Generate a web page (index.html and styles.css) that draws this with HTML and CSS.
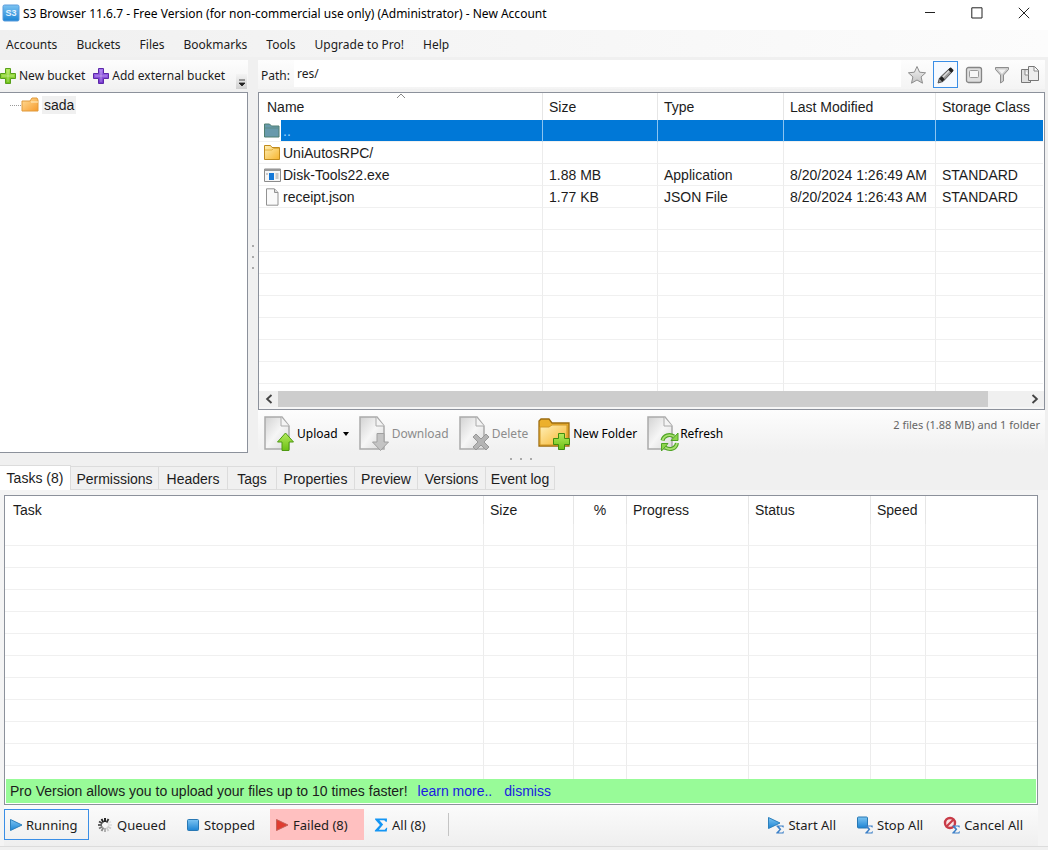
FILE: index.html
```html
<!DOCTYPE html>
<html lang="en">
<head>
<meta charset="utf-8">
<title>S3 Browser</title>
<link rel="stylesheet" href="styles.css">
</head>
<body>
<svg class="defs" aria-hidden="true">
  <defs>
    <linearGradient id="g-green" x1="0" y1="0" x2="0" y2="1"><stop offset="0" stop-color="#b4ea5c"/><stop offset="1" stop-color="#6cc014"/></linearGradient>
    <linearGradient id="g-purple" x1="0" y1="0" x2="0" y2="1"><stop offset="0" stop-color="#a678f0"/><stop offset="1" stop-color="#7434cc"/></linearGradient>
    <linearGradient id="g-folder" x1="0" y1="0" x2="1" y2="1"><stop offset="0" stop-color="#fff0b8"/><stop offset="1" stop-color="#f6b42c"/></linearGradient>
    <linearGradient id="g-orange" x1="0" y1="0" x2="1" y2="1"><stop offset="0" stop-color="#ffdf9c"/><stop offset="1" stop-color="#f79a2a"/></linearGradient>
    <linearGradient id="g-blue" x1="0" y1="0" x2="0" y2="1"><stop offset="0" stop-color="#7cc4f2"/><stop offset="1" stop-color="#1c84d4"/></linearGradient>
    <linearGradient id="g-page" x1="0" y1="0" x2="1" y2="1"><stop offset="0" stop-color="#d2d2d2"/><stop offset=".5" stop-color="#f6f6f6"/><stop offset="1" stop-color="#d8d8d8"/></linearGradient>
    <linearGradient id="g-grey" x1="0" y1="0" x2="0" y2="1"><stop offset="0" stop-color="#f2f2f2"/><stop offset="1" stop-color="#c4c4c4"/></linearGradient>
    <symbol id="plus" viewBox="0 0 16 16"><path d="M5.500 .5h5v5h5v5h-5v5h-5v-5h-5v-5h5z"/><path d="M8 2v12M2 8h12" stroke="#fff" stroke-opacity=".35" fill="none"/></symbol>
    <symbol id="page" viewBox="0 0 26 34"><path d="M1 1h17l7 9v23H1z" fill="url(#g-page)" stroke="#aaa" stroke-width="1.500"/><path d="M17 1v9h8" fill="#f4f4f4" stroke="#aaa"/></symbol>
    <symbol id="play" viewBox="0 0 14 14"><path d="M1.500 1.500 13 7 1.500 12.500z"/></symbol>
    <symbol id="sigma" viewBox="0 0 12 13"><path d="M.5.5h11v3h-1L9 2H4.500l3.500 4-4 5h5.500l1.500-2h.8l-.5 3.500H.3v-1L5 6.500.5 1.500z"/></symbol>
  </defs>
</svg>

<div class="window">
  <header class="titlebar">
    <svg class="app-icon" viewBox="0 0 18 18"><rect x="1" y="1" width="16" height="16" rx="1.500" fill="url(#g-blue)" stroke="#5a9cdc"/><text x="9" y="12" text-anchor="middle" class="app-icon-text">S3</text></svg>
    <h1 class="title">S3 Browser 11.6.7 - Free Version (for non-commercial use only) (Administrator) - New Account</h1>
    <div class="window-buttons">
      <button class="window-button" aria-label="Minimize"><svg viewBox="0 0 12 12"><path d="M1 5.500h10"/></svg></button>
      <button class="window-button" aria-label="Maximize"><svg viewBox="0 0 12 12"><path d="M.8.8h10.200v10.200H.8z"/></svg></button>
      <button class="window-button" aria-label="Close"><svg viewBox="0 0 12 12"><path d="M.8.8l10.400 10.400M11.200.8.8 11.200"/></svg></button>
    </div>
  </header>

  <nav class="menubar">
    <button>Accounts</button><button>Buckets</button><button>Files</button><button>Bookmarks</button><button>Tools</button><button>Upgrade to Pro!</button><button>Help</button>
  </nav>

  <div class="upper">
    <aside class="buckets">
      <div class="bucket-tools">
        <button><svg class="i16 green"><use href="#plus"/></svg>New bucket</button>
        <button><svg class="i16 purple"><use href="#plus"/></svg>Add external bucket</button>
        <button class="overflow" aria-label="More"><svg viewBox="0 0 8 8"><path d="M1 1h6M1 4h6L4 7z" fill="#222" stroke="#222" stroke-width=".8"/></svg></button>
      </div>
      <div class="tree">
        <div class="tree-item"><span class="tree-line"></span>
          <svg class="tree-icon" viewBox="0 0 18 16"><path d="M1 4h8l2-3h5l1 2v11H1z" fill="url(#g-orange)" stroke="#e09a3c"/><path d="M10 5h7" stroke="#fff0c8"/></svg>
          <span class="tree-label">sada</span></div>
      </div>
    </aside>

    <div class="split-v"><i></i><i></i><i></i></div>

    <section class="browser">
      <div class="path-bar">
        <label for="path">Path:</label>
        <input id="path" type="text" value="res/">
        <div class="path-tools">
          <button aria-label="Favorite"><svg viewBox="0 0 20 20"><path d="M10 1.500l2.600 5.700 6 .6-4.500 4.100 1.400 6.300L10 15l-5.500 3.200 1.400-6.300L1.400 7.800l6-.6z" fill="url(#g-grey)" stroke="#8d8d8d" stroke-linejoin="round"/></svg></button>
          <button class="pressed" aria-label="Edit"><svg viewBox="0 0 20 20"><path d="M2 18l1.500-5L14 3l3 3L7 16.500z" fill="#999" stroke="#555"/><path d="M4.500 12.500l3 3M13.500 3.500l3 3" stroke="#222" stroke-width="3.500"/><path d="M7 12l6-6" stroke="#ddd" stroke-width="1.500"/></svg></button>
          <button aria-label="Details"><svg viewBox="0 0 20 20"><rect x="2.500" y="2.500" width="15" height="15" rx="2" fill="#dedede" stroke="#858585" stroke-width="1.300"/><rect x="5.500" y="5.500" width="9" height="7" rx="1" fill="#f6f6f6" stroke="#999"/></svg></button>
          <button aria-label="Filter"><svg viewBox="0 0 20 20"><path d="M3.500 2.500h13v2L11.500 10v6l-3 2v-8L3.500 4.500z" fill="#ccc" stroke="#8d8d8d"/><path d="M6 4.500h8L10 9z" fill="#f3f3f3"/></svg></button>
          <button aria-label="Copy"><svg viewBox="0 0 20 20"><path d="M1.500 4.500h9v13h-9z" fill="#e0e0e0" stroke="#777"/><path d="M8.500 1.500h6l4 4v10h-10z" fill="#eee" stroke="#777"/><path d="M14 2v4h4M5 5v5h3.500" fill="#fff" stroke="#888"/></svg></button>
        </div>
      </div>

      <div class="files">
        <div class="grid-clip">
          <table class="grid files-grid">
            <colgroup><col><col class="w115"><col class="w126"><col class="w152"><col class="w107"></colgroup>
            <thead><tr><th class="sorted">Name<svg class="sort" viewBox="0 0 10 6"><path d="M1 5l4-4 4 4"/></svg></th><th>Size</th><th>Type</th><th>Last Modified</th><th>Storage Class</th></tr></thead>
            <tbody id="file-rows">
              <tr class="selected"><td><span class="file"><svg class="i18" viewBox="0 0 18 18"><path d="M1.500 2h5l2 2h7.500v11h-14.500z" fill="#689aac" stroke="#4e7f70"/><path d="M2 6h13.500" stroke="#5c8c86"/></svg><span class="file-name">..</span></span></td><td></td><td></td><td></td><td></td></tr>
              <tr><td><span class="file"><svg class="i18" viewBox="0 0 18 18"><path d="M1.500 1.500h6l1.500 2h7.500v12h-15z" fill="url(#g-folder)" stroke="#c08a1c"/><path d="M2 6h7l1.500-1.500H16" fill="none" stroke="#e0b040"/></svg><span class="file-name">UniAutosRPC/</span></span></td><td></td><td></td><td></td><td></td></tr>
              <tr><td><span class="file"><svg class="i18" viewBox="0 0 18 18"><path d="M1.500 3h16v12.500h-16z" fill="#f6f6f6" stroke="#8c8c8c"/><path d="M1.500 4h16" stroke="#999" stroke-width="2"/><path d="M6 7h5v7H6z" fill="#1478d8"/><path d="M12.500 8h3M12.500 10h3M12.500 12h3M3 8h2" stroke="#999"/></svg><span class="file-name">Disk-Tools22.exe</span></span></td><td>1.88 MB</td><td>Application</td><td>8/20/2024 1:26:49 AM</td><td>STANDARD</td></tr>
              <tr><td><span class="file"><svg class="i18" viewBox="0 0 18 18"><path d="M3.500.8h8l3.500 3.700v12.700H3.500z" fill="#fafafa" stroke="#929292"/><path d="M11.500 1v3.500H15" fill="#ddd" stroke="#929292"/></svg><span class="file-name">receipt.json</span></span></td><td>1.77 KB</td><td>JSON File</td><td>8/20/2024 1:26:43 AM</td><td>STANDARD</td></tr>
            </tbody>
          </table>
        </div>
        <div class="hscroll">
          <button aria-label="Scroll left"><svg viewBox="0 0 8 8"><path d="M6 .8 2.500 4 6 7.200"/></svg></button>
          <div class="track"><div class="thumb"></div></div>
          <button aria-label="Scroll right"><svg viewBox="0 0 8 8"><path d="M2 .8 5.500 4 2 7.200"/></svg></button>
        </div>
      </div>

      <div class="file-tools">
        <button class="upload"><svg viewBox="0 0 32 36"><use href="#page" width="26" height="34"/><path d="M21.500 17l8 9h-4.500v8.500h-7V26h-4.500z" fill="url(#g-green)" stroke="#4f9a12"/></svg>Upload<span class="caret"></span></button>
        <button class="download" disabled><svg viewBox="0 0 32 36"><use href="#page" width="26" height="34"/><path d="M18 17.500h7V26h4.500l-8 8.500-8-8.500H18z" fill="#c4c4c4" stroke="#a0a0a0"/></svg>Download</button>
        <button class="delete" disabled><svg viewBox="0 0 32 36"><use href="#page" width="26" height="34"/><path d="M17 18l5 5 5-5 3 3-5 5 5 5-3 3-5-5-5 5-3-3 5-5-5-5z" fill="#b4b4b4" stroke="#989898"/></svg>Delete</button>
        <button class="new-folder"><svg viewBox="0 0 32 36"><path d="M1 30V5l2-2h8l3 4h17v23z" fill="#ecb02c" stroke="#9c6c10" stroke-width="1.300"/><path d="M2 29V11h9l3-2h15v20z" fill="url(#g-folder)" stroke="#d09828"/><path d="M20.500 17.500h6v5h5v6h-5v5h-6v-5h-5v-6h5z" fill="url(#g-green)" stroke="#3f8c10"/></svg>New Folder</button>
        <button class="refresh"><svg viewBox="0 0 32 36"><use href="#page" width="26" height="34"/><path d="M15.500 24.500c1-5 7-7 11.500-4M30 27c-1 6-7 7.500-12 4.500" fill="none" stroke="#4fa424" stroke-width="4"/><path d="M15.500 24.500c1-5 7-7 11.500-4M30 27c-1 6-7 7.500-12 4.500" fill="none" stroke="#a8e070" stroke-width="1.800"/><path d="M24 24.500h7V17zM21 27.500h-6.500V35z" fill="#8cd44c" stroke="#4fa424"/></svg>Refresh</button>
        <span class="summary">2 files (1.88 MB) and 1 folder</span>
      </div>
    </section>
  </div>

  <div class="split-h"><i></i><i></i><i></i></div>

  <section class="lower">
    <div class="tabs" role="tablist">
      <button role="tab" class="tab active" aria-selected="true">Tasks (8)</button><button role="tab" class="tab">Permissions</button><button role="tab" class="tab">Headers</button><button role="tab" class="tab">Tags</button><button role="tab" class="tab">Properties</button><button role="tab" class="tab">Preview</button><button role="tab" class="tab">Versions</button><button role="tab" class="tab">Event log</button>
    </div>
    <div class="tab-page">
      <div class="tasks">
        <div class="grid-clip">
          <table class="grid tasks-grid">
            <colgroup><col><col class="w90"><col class="w53"><col class="w122"><col class="w122"><col class="w55"><col class="w111"></colgroup>
            <thead><tr><th>Task</th><th>Size</th><th class="percent">%</th><th>Progress</th><th>Status</th><th>Speed</th><th></th></tr></thead>
            <tbody id="task-rows"></tbody>
          </table>
        </div>
        <div class="promo">Pro Version allows you to upload your files up to 10 times faster! <a href="#more">learn more..</a><a href="#dismiss">dismiss</a></div>
      </div>
      <div class="task-tools">
        <button class="task-button running"><svg class="i14 blue"><use href="#play"/></svg>Running</button>
        <button class="task-button queued"><svg class="i16" viewBox="0 0 16 16" fill="none" stroke-width="1.800"><path d="M8 1v4" stroke="#111"/><path d="M4.500 2l2 3.500" stroke="#222"/><path d="M2 4.500l3.500 2" stroke="#444"/><path d="M1 8h4" stroke="#555"/><path d="M2 11.500l3.500-2" stroke="#777"/><path d="M4.500 14l2-3.500" stroke="#888"/><path d="M8 15v-4" stroke="#aaa"/><path d="M11.500 14l-2-3.500M14 11.500l-3.500-2" stroke="#ccc"/><path d="M15 8h-4M14 4.500l-3.500 2" stroke="#e2e2e2"/><path d="M11.500 2l-2 3.500" stroke="#333"/></svg>Queued</button>
        <button class="task-button stopped"><svg class="i14" viewBox="0 0 14 14"><rect x="1.500" y="1.500" width="11" height="11" rx="1" fill="url(#g-blue)" stroke="#2878b4"/></svg>Stopped</button>
        <button class="task-button failed"><svg class="i14 red"><use href="#play"/></svg>Failed (8)</button>
        <button class="task-button all"><svg class="i14 sky"><use href="#sigma"/></svg>All (8)</button>
        <span class="separator"></span>
        <div class="bulk">
          <button class="task-button"><svg class="i18" viewBox="0 0 18 18"><use href="#play" width="14" height="14" class="blue"/><use href="#sigma" x="9" y="9" width="8" height="9" class="sky-dark"/></svg>Start All</button>
          <button class="task-button"><svg class="i18" viewBox="0 0 18 18"><rect x="1.500" y="1" width="10" height="11" rx="1" fill="url(#g-blue)" stroke="#2878b4"/><use href="#sigma" x="9" y="9" width="8" height="9" class="sky-dark"/></svg>Stop All</button>
          <button class="task-button"><svg class="i18" viewBox="0 0 18 18"><circle cx="7" cy="7" r="5" fill="#fbe4e4" stroke="#c83c48" stroke-width="2.400"/><path d="M3.500 10.500l7-7" stroke="#c83c48" stroke-width="2.200"/><use href="#sigma" x="9" y="9" width="8" height="9" class="sky-dark"/></svg>Cancel All</button>
        </div>
      </div>
    </div>
  </section>
</div>
<script src="grid.js"></script>
</body>
</html>
```
FILE: styles.css
```css
* { box-sizing: border-box; }
body { margin: 0; background: #f0f0f0; color: #1c1c1c; font: 12px/16px "Noto Sans", "Open Sans", sans-serif; }
button { display: flex; align-items: center; margin: 0; padding: 0; border: 0; background: none; color: inherit; font: inherit; white-space: nowrap; }
svg { display: block; flex: none; }
.defs { position: absolute; width: 0; height: 0; }
.i14 { width: 14px; height: 14px; }
.i16 { width: 16px; height: 16px; }
.i18 { width: 18px; height: 18px; }
.green { fill: url(#g-green); stroke: #58a01c; }
.purple { fill: url(#g-purple); stroke: #5c28a8; }
.blue { fill: url(#g-blue); stroke: #2c80bc; }
.red { fill: #e03c30; stroke: #c46058; }
.sky { fill: #1496f4; }
.sky-dark { fill: #3c80c8; }

.window { display: flex; flex-direction: column; height: 100vh; min-height: 600px; padding-bottom: 3px; }

.titlebar { display: flex; align-items: center; flex: none; height: 30px; padding: 0 1px 4px 2px; background: #fff; }
.app-icon { width: 18px; height: 18px; }
.app-icon-text { fill: #e4f2ff; font: bold 9px "Liberation Sans", sans-serif; }
.title { flex: 1; margin: 0 0 0 3px; padding-top: 2px; overflow: hidden; font-size: 12px; font-weight: 400; line-height: 16px; white-space: nowrap; color: #000; }
.window-buttons { display: flex; }
.window-button { justify-content: center; width: 47px; height: 26px; }
.window-button svg { width: 12px; height: 12px; fill: none; stroke: #222; }

.menubar { display: flex; flex: none; gap: 19px; height: 27px; padding: 2px 0 0 6px; background: linear-gradient(90deg, #f0f0f0, #fcfcfc); }

.upper { display: flex; flex: 393 1 0; min-height: 0; padding-top: 3px; }
.buckets { display: flex; flex-direction: column; flex: none; width: 248px; }
.bucket-tools { display: flex; flex: none; gap: 8px; height: 29px; margin-bottom: 3px; background: linear-gradient(#fdfdfd, #f2f2f2); }
.bucket-tools button { gap: 3px; padding-top: 2px; }
.bucket-tools .overflow { align-self: flex-end; justify-content: center; width: 11px; height: 15px; margin: 0 1px 0 auto; background: linear-gradient(#f4f4f4, #d0d0d0); }
.overflow svg { width: 8px; height: 8px; }
.tree { flex: 1; border: 1px solid #8c919b; border-left: 0; background: #fff; }
.tree-item { display: flex; align-items: center; height: 24px; padding-left: 10px; }
.tree-line { width: 11px; border-top: 1px dotted #999; }
.tree-icon { width: 18px; height: 16px; }
.tree-label { margin-left: 3px; padding: 0 2px; background: #f0f0f0; font: 14px/18px "Liberation Sans", Arial, sans-serif; }

.split-v { display: flex; flex: none; flex-direction: column; align-items: center; justify-content: center; gap: 9px; width: 10px; }
.split-h { display: flex; flex: none; justify-content: center; align-items: center; gap: 8px; height: 12px; padding-right: 6px; }
.split-v i, .split-h i { width: 2px; height: 2px; background: #aaa; }

.browser { display: flex; flex: 1; flex-direction: column; min-width: 0; padding-right: 3px; }
.path-bar { display: flex; flex: none; align-items: center; height: 29px; margin-bottom: 3px; padding-left: 3px; background: linear-gradient(#fdfdfd, #f4f4f4); }
.path-bar label { padding-top: 2px; }
.path-bar input { flex: 1; align-self: flex-start; min-width: 0; height: 27px; margin-left: 4px; padding: 0 3px; border: 0; background: #fff; color: inherit; font: inherit; }
.path-tools { display: flex; gap: 4px; margin-left: 4px; padding-right: 3px; }
.path-tools button { justify-content: center; width: 24px; height: 27px; }
.path-tools button.pressed { width: 25px; border: 1px solid #3a8ee6; background: #f6faff; }
.path-tools svg { width: 20px; height: 20px; }

.files { display: flex; flex: 1; flex-direction: column; min-height: 0; border: 1px solid #8c919b; background: #fff; }
.files .grid-clip { padding-right: 1px; }
.grid-clip { flex: 1; min-height: 0; overflow: hidden; }
.grid { width: 100%; table-layout: fixed; border-collapse: separate; border-spacing: 0; font: 14px/18px "Liberation Sans", Arial, sans-serif; }
.grid th { height: 27px; padding: 0 6px; border-right: 1px solid #e6e6e6; font-weight: 400; text-align: left; white-space: nowrap; }
.grid td { height: 22px; padding: 0 6px; border-right: 1px solid #ececec; border-bottom: 1px solid #f0f0f0; white-space: nowrap; }
.grid th:last-child, .grid td:last-child { border-right: 0; }
.grid .sorted { position: relative; padding-left: 8px; }
.sort { position: absolute; top: 0; left: 50%; width: 10px; height: 6px; margin-left: -5px; fill: none; stroke: #888; }
.grid td:first-child { padding: 0; }
.file { display: flex; align-items: center; height: 21px; padding-left: 4px; }
.file-name { flex: 1; align-self: stretch; padding: 1px 0 0 2px; line-height: 21px; }
.selected td { background: #0078d7; color: #9cd4ff; border-right-color: #8cc4f0; }
.selected td:first-child { background: #fff; }
.selected .file-name { background: #0078d7; }
.w53 { width: 53px; } .w55 { width: 55px; } .w90 { width: 90px; } .w107 { width: 107px; } .w111 { width: 111px; }
.w115 { width: 115px; } .w122 { width: 122px; } .w126 { width: 126px; } .w152 { width: 152px; }

.hscroll { display: flex; flex: none; height: 18px; background: #f0f0f0; border-bottom: 2px solid #f6f6f6; }
.hscroll button { justify-content: center; width: 19px; }
.hscroll svg { width: 10px; height: 10px; fill: none; stroke: #444; stroke-width: 1.5; }
.track { flex: 1; }
.thumb { width: 95%; height: 100%; background: #cdcdcd; }

.file-tools { display: flex; flex: none; align-items: flex-start; gap: 10px; height: 43px; padding: 6px 5px 0 6px; background: linear-gradient(#fdfdfd, #f0f0f0); color: #000; }
.file-tools button { gap: 1px; height: 36px; }
.file-tools button:disabled { color: #8c8c8c; }
.file-tools svg { width: 32px; height: 36px; }
.file-tools .new-folder { gap: 3px; }
.caret { margin-left: 4px; border: 3px solid transparent; border-top: 4px solid #000; border-bottom: 0; }
.summary { margin: 1px 0 0 auto; color: #666; font-size: 11px; white-space: nowrap; }

.lower { display: flex; flex: 382 1 0; flex-direction: column; min-height: 0; }
.tabs { display: grid; grid-template-columns: 71px 88px 69px 49px 78px 63px 68px 69px; align-items: end; flex: none; height: 25px; font: 14px/18px "Liberation Sans", Arial, sans-serif; }
.tab { justify-content: center; height: 24px; padding-top: 1px; border: 1px solid #dcdcdc; border-left: 0; }
.tab.active { height: 25px; padding-bottom: 2px; border-bottom: 0; background: #fff; }
.tab-page { display: flex; flex: 1; flex-direction: column; min-height: 0; padding: 5px 10px 0 4px; border: 0 solid #dcdcdc; border-bottom-width: 1px; background: #f4f4f4; }
.tasks { display: flex; flex: 1; flex-direction: column; min-height: 0; border: 1px solid #8c919b; background: #fff; }
.tasks-grid th { height: 28px; }
.tasks-grid th:first-child { padding-left: 8px; }
.grid .percent { padding: 0; text-align: center; }
.promo { flex: none; margin: 0 1px 1px; padding: 2px 4px; background: #98fb98; font: 14px/20px "Liberation Sans", Arial, sans-serif; white-space: nowrap; }
.promo a { margin: 0 6px; color: #1a1ae0; text-decoration: none; }
.task-tools { display: flex; flex: none; align-items: flex-start; height: 41px; padding-top: 4px; background: linear-gradient(#fbfbfb, #efefef); font-size: 13px; line-height: 18px; }
.task-button { gap: 4px; height: 31px; padding: 0 5px; }
.running { gap: 3px; width: 85px; padding-left: 4px; border: 1px solid #3a8ee6; }
.queued { width: 88px; padding-left: 8px; }
.stopped { width: 93px; padding-left: 9px; }
.failed { width: 94px; background: #ffc0c0; }
.all { width: 84px; padding-left: 10px; }
.separator { width: 1px; height: 23px; margin-top: 4px; background: #c4c4c4; }
.bulk { display: flex; gap: 10px; margin-left: auto; padding-right: 10px; }
.bulk .task-button { gap: 3px; }
```
FILE: grid.js
```js
// Blank rows keep the grid lines running to the bottom of each list.
function addBlankRows(id, columns, count) {
  const body = document.getElementById(id);
  for (let i = 0; i < count; i++) {
    const row = body.insertRow();
    for (let c = 0; c < columns; c++) row.insertCell();
  }
}
addBlankRows("file-rows", 5, 40);
addBlankRows("task-rows", 7, 40);
```
